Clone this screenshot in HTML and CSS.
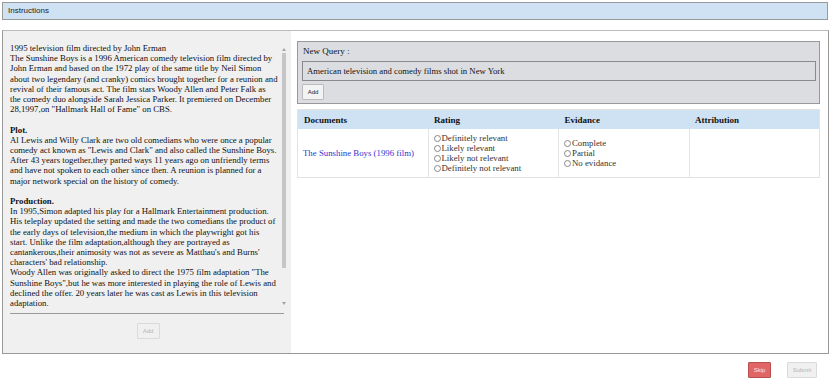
FILE: index.html
```html
<!DOCTYPE html>
<html lang="en">
<head>
    <meta charset="UTF-8">
    <title>Relevance task</title>
    <link rel="stylesheet" href="styles.css">
</head>
<body>
    <div class="instructions-bar">Instructions</div>

    <div class="task-container">
        <div class="doc-panel">
            <div class="doc-scroll">
                <div class="doc-text">
                    <p>1995 television film directed by John Erman<br>
                    The Sunshine Boys is a 1996 American comedy television film directed by<br>
                    John Erman and based on the 1972 play of the same title by Neil Simon<br>
                    about two legendary (and cranky) comics brought together for a reunion and<br>
                    revival of their famous act. The film stars Woody Allen and Peter Falk as<br>
                    the comedy duo alongside Sarah Jessica Parker. It premiered on December<br>
                    28,1997,on "Hallmark Hall of Fame" on CBS.</p>
                    <p><b>Plot.</b><br>
                    Al Lewis and Willy Clark are two old comedians who were once a popular<br>
                    comedy act known as "Lewis and Clark" and also called the Sunshine Boys.<br>
                    After 43 years together,they parted ways 11 years ago on unfriendly terms<br>
                    and have not spoken to each other since then. A reunion is planned for a<br>
                    major network special on the history of comedy.</p>
                    <p><b>Production.</b><br>
                    In 1995,Simon adapted his play for a Hallmark Entertainment production.<br>
                    His teleplay updated the setting and made the two comedians the product of<br>
                    the early days of television,the medium in which the playwright got his<br>
                    start. Unlike the film adaptation,although they are portrayed as<br>
                    cantankerous,their animosity was not as severe as Matthau's and Burns'<br>
                    characters' bad relationship.<br>
                    Woody Allen was originally asked to direct the 1975 film adaptation "The<br>
                    Sunshine Boys",but he was more interested in playing the role of Lewis and<br>
                    declined the offer. 20 years later he was cast as Lewis in this television<br>
                    adaptation.</p>
                </div>
                <div class="scrollbar">
                    <span class="sb-arrow sb-up"></span>
                    <span class="sb-thumb"></span>
                    <span class="sb-arrow sb-down"></span>
                </div>
            </div>
            <hr class="doc-rule">
            <div class="doc-actions">
                <button class="btn btn-disabled btn-w23" disabled>Add</button>
            </div>
        </div>

        <div class="results-panel">
            <div class="query-box">
                <div class="query-label">New Query :</div>
                <div class="query-input">American television and comedy films shot in New York</div>
                <button class="btn btn-add">Add</button>
            </div>

            <table class="results-table">
                <thead>
                    <tr>
                        <th>Documents</th>
                        <th>Rating</th>
                        <th>Evidance</th>
                        <th>Attribution</th>
                    </tr>
                </thead>
                <tbody>
                    <tr>
                        <td><a href="#" class="doc-link">The Sunshine Boys (1996 film)</a></td>
                        <td>
                            <label class="opt"><span class="radio"></span>Definitely relevant</label>
                            <label class="opt"><span class="radio"></span>Likely relevant</label>
                            <label class="opt"><span class="radio"></span>Likely not relevant</label>
                            <label class="opt"><span class="radio"></span>Definitely not relevant</label>
                        </td>
                        <td>
                            <label class="opt"><span class="radio"></span>Complete</label>
                            <label class="opt"><span class="radio"></span>Partial</label>
                            <label class="opt"><span class="radio"></span>No evidance</label>
                        </td>
                        <td></td>
                    </tr>
                </tbody>
            </table>
        </div>
    </div>

    <div class="footer-actions">
        <button class="btn btn-skip btn-w23">Skip</button>
        <button class="btn btn-disabled btn-w30">Submit</button>
    </div>
</body>
</html>
```

FILE: styles.css
```css
body {
    margin: 0;
    padding: 0;
    font-family: "Liberation Serif", "Times New Roman", serif;
    color: #111;
    background-color: #fff;
}

.instructions-bar {
    margin: 2px 2px 0 2px;
    height: 16px;
    line-height: 16px;
    padding-left: 5px;
    background-color: #cfe2f3;
    border: 1px solid #9a9a9a;
    font-family: "Liberation Sans", Arial, sans-serif;
    font-size: 8px;
    color: #222;
}

.task-container {
    display: flex;
    margin: 10px 1px 0 2px;
    height: 322px;
    border: 1px solid #999;
    border-top-color: #bbb;
}

.doc-panel {
    width: 276px;
    padding: 12px 5px 0 7px;
    background-color: #f0f0f0;
}

.doc-scroll {
    display: flex;
    height: 266px;
}

.doc-text {
    flex: 1;
    overflow: hidden;
    white-space: nowrap;
    font-size: 8.75px;
    line-height: 10.2px;
}

.doc-text p {
    margin: 0 0 10.2px 0;
}

.doc-text p:last-child {
    margin-bottom: 0;
}

/* fake scrollbar, the real one is hidden in screenshots */
.scrollbar {
    width: 5px;
    display: flex;
    flex-direction: column;
    align-items: center;
}

.sb-arrow {
    width: 0;
    height: 0;
    border-left: 2px solid transparent;
    border-right: 2px solid transparent;
}

.sb-up {
    margin-top: 5px;
    border-bottom: 3px solid #a5a5a5;
}

.sb-down {
    margin-top: auto;
    margin-bottom: 4px;
    border-top: 3px solid #a5a5a5;
}

.sb-thumb {
    width: 4px;
    height: 215px;
    margin-top: 2px;
    background-color: #c6c6c6;
}

.doc-rule {
    margin: 4px 2px 0 0;
    border: none;
    border-top: 1px solid #999;
}

.doc-actions {
    display: flex;
    justify-content: center;
    padding-top: 9px;
}

.btn {
    display: block;
    box-sizing: border-box;
    font-family: "Liberation Sans", Arial, sans-serif;
    font-size: 6px;
    padding: 0 4px;
    height: 16px;
    border-radius: 1px;
    cursor: pointer;
}

.btn-w23 {
    width: 23px;
    padding: 0;
}

.btn-w30 {
    width: 30px;
    padding: 0;
}

.btn-disabled {
    background-color: #f0f0f0;
    color: #b5b5b5;
    border: 1px solid #dadada;
}

.results-panel {
    flex: 1;
    padding: 10px 8px 0 6px;
}

.query-box {
    background-color: #dcdde1;
    border: 1px solid #999;
    padding: 3px 3px 3px 4px;
}

.query-label {
    font-size: 9px;
    line-height: 12px;
    margin-bottom: 4px;
    padding-left: 1px;
}

.query-input {
    height: 18px;
    line-height: 18px;
    border: 1px solid #8a8a8a;
    padding-left: 4px;
    font-size: 8.7px;
    margin-bottom: 3px;
}

.btn-add {
    width: 22px;
    padding: 0;
    background-color: #f3f3f3;
    color: #222;
    border: 1px solid #bbb;
}

.results-table {
    width: 100%;
    margin-top: 5px;
    border-collapse: collapse;
    table-layout: fixed;
    border: 1px solid #e3e3e3;
}

.results-table th {
    background-color: #cfe2f3;
    text-align: left;
    font-size: 9px;
    font-weight: bold;
    height: 19px;
    padding: 0 6px;
}

.results-table td {
    border-left: 1px solid #e3e3e3;
    font-size: 8.8px;
    height: 48px;
    padding: 0 5px;
    vertical-align: middle;
}

.results-table td:first-child {
    border-left: none;
}

.doc-link {
    color: #3434d0;
    text-decoration: none;
    font-size: 8.8px;
}

.opt {
    display: flex;
    align-items: center;
    line-height: 10px;
    color: #333;
}

.radio {
    width: 5px;
    height: 5px;
    border: 1px solid #888;
    border-radius: 50%;
    margin-right: 1px;
}

.footer-actions {
    display: flex;
    justify-content: flex-end;
    gap: 16px;
    padding: 8px 13px 0 0;
}

.btn-skip {
    background-color: #e06666;
    color: #fbe3e3;
    border: 1px solid #b45050;
}
```
